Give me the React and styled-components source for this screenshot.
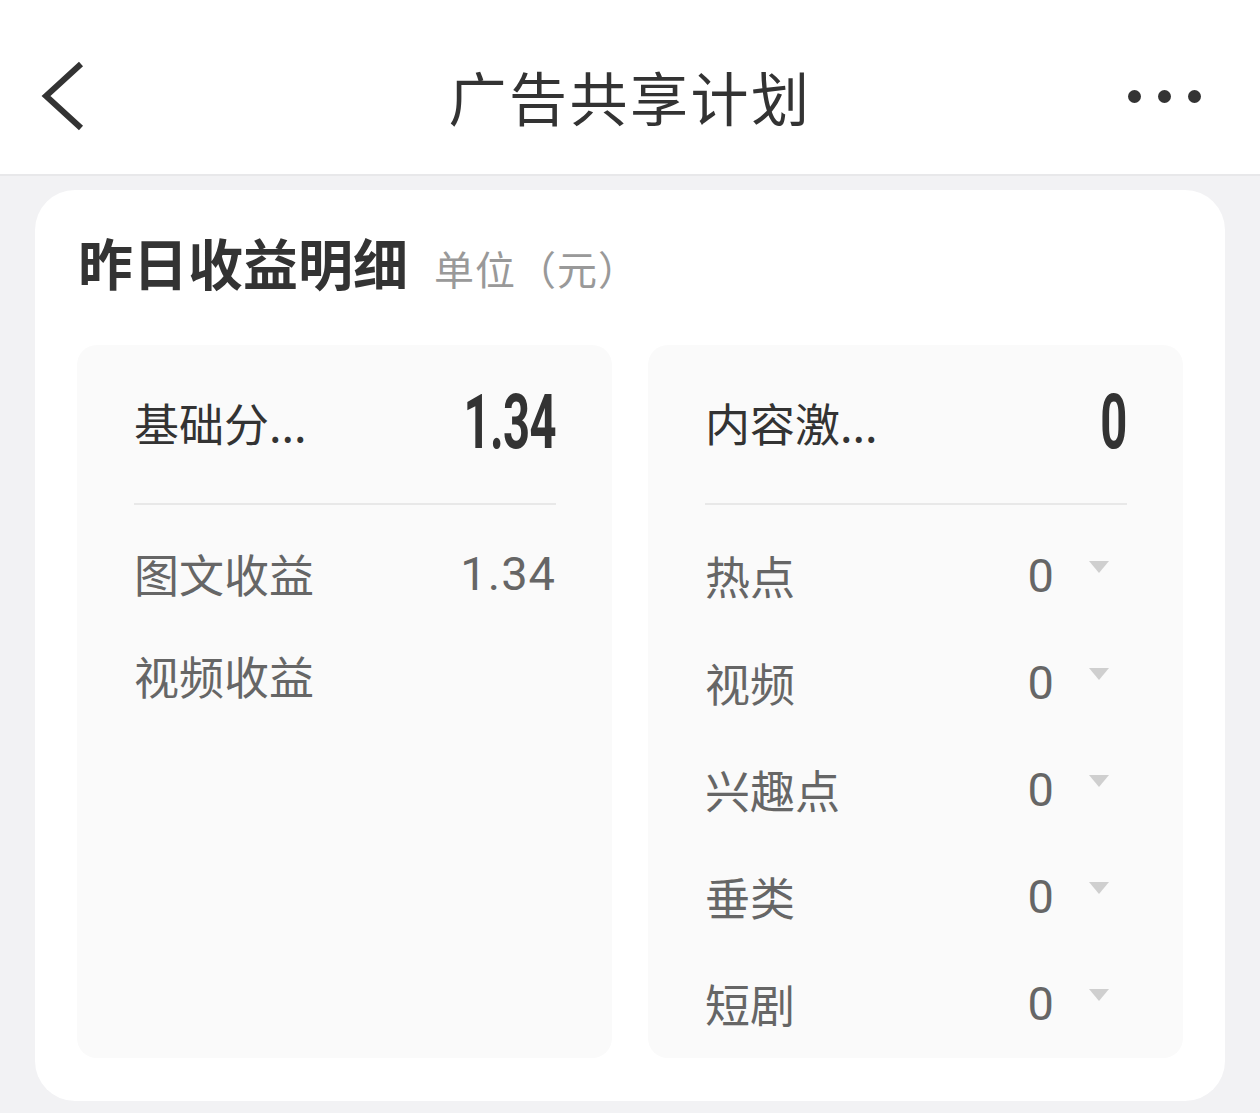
import React from 'react';
import styled, { createGlobalStyle } from 'styled-components';

const GlobalStyle = createGlobalStyle`
  html, body {
    margin: 0;
    padding: 0;
    background: #f2f2f4;
    font-family: Roboto, "Noto Sans CJK SC", sans-serif;
  }
`;

const Page = styled.div`
  width: 1260px;
  min-height: 1113px;
  background: #f2f2f4;
`;

const NavBar = styled.header`
  height: 176px;
  background: #fff;
  border-bottom: 2px solid #e8e8ea;
  display: flex;
  align-items: center;
  box-sizing: border-box;
  padding: 18px 59px 0 40px;
`;

const NavSide = styled.div`
  width: ${p => p.$w}px;
  display: flex;
  justify-content: ${p => (p.$end ? 'flex-end' : 'flex-start')};
  align-items: center;
`;

const NavTitle = styled.h1`
  flex: 1;
  margin: 0;
  text-align: center;
  font-family: "Noto Sans CJK SC", sans-serif;
  font-size: 58px;
  font-weight: 400;
  color: #333;
  letter-spacing: 2.5px;
`;

const Dots = styled.div`
  display: flex;
  gap: 17px;
`;

const Dot = styled.span`
  width: 13px;
  height: 13px;
  border-radius: 50%;
  background: #333;
`;

const Card = styled.section`
  margin: 14px 35px 0;
  background: #fff;
  border-radius: 40px;
  padding: 38px 42px 43px;
`;

const CardHead = styled.div`
  display: flex;
  align-items: baseline;
  gap: 26px;
  margin-bottom: 48px;
  padding-left: 1px;
`;

const CardTitle = styled.h2`
  margin: 0;
  font-family: "Noto Sans CJK SC", sans-serif;
  font-size: 55px;
  font-weight: 700;
  color: #333;
  line-height: 1.2;
`;

const Unit = styled.span`
  font-family: "Noto Sans CJK SC", sans-serif;
  font-size: 40px;
  letter-spacing: 1px;
  color: #999;
`;

const Panels = styled.div`
  display: grid;
  grid-template-columns: 1fr 1fr;
  gap: 36px;
`;

const Panel = styled.div`
  background: #fafafa;
  border-radius: 20px;
  padding: 30px 56px 0 57px;
  height: 713px;
  box-sizing: border-box;
`;

const TotalRow = styled.div`
  height: 94px;
  display: flex;
  align-items: center;
  justify-content: space-between;
`;

const TotalLabel = styled.span`
  font-family: "Noto Sans CJK SC", sans-serif;
  font-size: 45px;
  color: #333;
`;

const BigValue = styled.span`
  display: inline-block;
  font-family: Roboto, sans-serif;
  font-weight: 700;
  font-size: 76px;
  line-height: 1;
  color: #333;
  transform: scaleX(0.62);
  transform-origin: right center;
  letter-spacing: -1px;
`;

const Divider = styled.div`
  height: 2px;
  background: #e8e8e8;
  margin: 34px 0 17px;
`;

const Row = styled.div`
  height: ${p => p.$h}px;
  display: flex;
  align-items: center;
`;

const RowLabel = styled.span`
  flex: 1;
  font-family: "Noto Sans CJK SC", sans-serif;
  font-size: 45px;
  color: #666;
`;

const RowValue = styled.span`
  font-family: Roboto, sans-serif;
  font-size: 47px;
  letter-spacing: 1px;
  color: #666;
`;

const ArrowSlot = styled.div`
  width: 72px;
  align-self: stretch;
  box-sizing: border-box;
  padding: 39px 0 0 34px;
`;

const Arrow = styled.div`
  width: 0;
  height: 0;
  border-left: 10px solid transparent;
  border-right: 10px solid transparent;
  border-top: 12px solid #cfcfcf;
`;

const contentRows = ['热点', '视频', '兴趣点', '垂类', '短剧'];

const App = () => (
  <Page>
    <GlobalStyle />
    <NavBar>
      <NavSide $w={179}>
        <svg width="48" height="72" viewBox="0 0 48 72">
          <polyline points="41,4 6,36 41,68" fill="none" stroke="#333" strokeWidth="6" />
        </svg>
      </NavSide>
      <NavTitle>广告共享计划</NavTitle>
      <NavSide $w={160} $end>
        <Dots>
          <Dot />
          <Dot />
          <Dot />
        </Dots>
      </NavSide>
    </NavBar>

    <Card>
      <CardHead>
        <CardTitle>昨日收益明细</CardTitle>
        <Unit>单位（元）</Unit>
      </CardHead>
      <Panels>
        <Panel>
          <TotalRow>
            <TotalLabel>基础分...</TotalLabel>
            <BigValue>1.34</BigValue>
          </TotalRow>
          <Divider />
          <Row $h={102}>
            <RowLabel>图文收益</RowLabel>
            <RowValue>1.34</RowValue>
          </Row>
          <Row $h={102}>
            <RowLabel>视频收益</RowLabel>
          </Row>
        </Panel>
        <Panel>
          <TotalRow>
            <TotalLabel>内容激...</TotalLabel>
            <BigValue>0</BigValue>
          </TotalRow>
          <Divider />
          {contentRows.map(name => (
            <Row key={name} $h={107}>
              <RowLabel>{name}</RowLabel>
              <RowValue>0</RowValue>
              <ArrowSlot>
                <Arrow />
              </ArrowSlot>
            </Row>
          ))}
        </Panel>
      </Panels>
    </Card>
  </Page>
);

export default App;
